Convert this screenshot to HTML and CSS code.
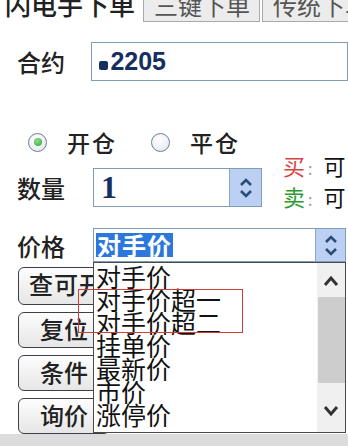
FILE: index.html
```html
<!DOCTYPE html>
<html>
<head>
    <meta name="viewport" content="width=device-width, initial-scale=1">
    <link rel="stylesheet" href="styles.css">
</head>
<body>
    <div class="screen">
        <!-- order type tabs -->
        <div class="tabs">
            <div class="tab active-tab">闪电手下单</div>
            <div class="tab">三键下单</div>
            <div class="tab">传统下单</div>
        </div>

        <div class="row contract-row">
            <span class="label">合约</span>
            <div class="field contract"><span class="mark"></span>2205</div>
        </div>

        <div class="radios">
            <span class="radio checked"></span><span class="radio-text">开仓</span>
            <span class="radio"></span><span class="radio-text">平仓</span>
        </div>

        <div class="row qty-row">
            <span class="label">数量</span>
            <div class="spin">
                <span class="spin-value">1</span>
                <span class="spin-btn">
                    <svg width="14" height="22" viewBox="0 0 14 22"><path d="M2 8 L7 3 L12 8" fill="none" stroke="#2c4a78" stroke-width="2.6"/><path d="M2 14 L7 19 L12 14" fill="none" stroke="#2c4a78" stroke-width="2.6"/></svg>
                </span>
            </div>
            <div class="avail">
                <div><span class="buy">买</span><span class="colon">:</span> 可</div>
                <div><span class="sell">卖</span><span class="colon">:</span> 可</div>
            </div>
        </div>

        <div class="row price-row">
            <span class="label">价格</span>
            <div class="combo">
                <span class="selected">对手价</span>
                <span class="combo-btn">
                    <svg width="14" height="26" viewBox="0 0 14 26"><path d="M2 10 L7 5 L12 10" fill="none" stroke="#2c4a78" stroke-width="2.6"/><path d="M2 17 L7 22 L12 17" fill="none" stroke="#2c4a78" stroke-width="2.6"/></svg>
                </span>
            </div>
        </div>

        <div class="buttons">
            <div class="btn btn-first">查可开</div>
            <div class="btn">复位</div>
            <div class="btn">条件</div>
            <div class="btn">询价</div>
        </div>

        <div class="status"></div>

        <!-- open dropdown of the price combo -->
        <div class="droplist">
            <ul class="items">
                <li>对手价</li>
                <li>对手价超一</li>
                <li>对手价超二</li>
                <li>挂单价</li>
                <li>最新价</li>
                <li>市价</li>
                <li>涨停价</li>
            </ul>
            <div class="scrollbar">
                <svg class="arrow-up" width="16" height="12" viewBox="0 0 16 12"><path d="M2 10 L8 3 L14 10" fill="none" stroke="#333" stroke-width="3"/></svg>
                <div class="thumb"></div>
                <svg class="arrow-down" width="16" height="12" viewBox="0 0 16 12"><path d="M2 2 L8 9 L14 2" fill="none" stroke="#333" stroke-width="3"/></svg>
            </div>
        </div>

        <!-- red annotation box -->
        <div class="highlight-box"></div>
    </div>
</body>
</html>
```

FILE: styles.css
```css
body {
    margin: 0;
    background: #fff;
    font-family: "Noto Sans CJK SC", "Noto Sans", sans-serif;
}

.screen {
    position: relative;
    width: 348px;
    height: 446px;
    overflow: hidden;
    background: #fff;
}

/* Tabs */
.tabs {
    display: flex;
    height: 30px;
    margin-top: -8px;
}

.tab {
    box-sizing: border-box;
    height: 30px;
    padding: 0 10px;
    font-size: 24px;
    line-height: 25px;
    color: #555;
    background: #ececec;
    border: 1px solid #a9a9a9;
    border-top: none;
    margin-left: 2px;
    white-space: nowrap;
}

.active-tab {
    width: 141px;
    margin-left: 0;
    padding-left: 5px;
    font-size: 26px;
    line-height: 24px;
    color: #222;
    background: #fff;
    border: none;
    font-weight: 500;
}

.tab:nth-child(2) {
    width: 117px;
}

/* Rows */
.row {
    display: flex;
    align-items: center;
}

.label {
    width: 76px;
    padding-left: 17px;
    font-size: 24px;
    font-weight: 500;
    color: #222;
}

.field {
    box-sizing: border-box;
    border: 1px solid #7f9db9;
    background: #fff;
}

.contract-row {
    margin-top: 20px;
    height: 39px;
}

.contract {
    width: 262px;
    height: 39px;
    padding-left: 7px;
    display: flex;
    align-items: center;
    font-family: "Liberation Sans", sans-serif;
    font-weight: bold;
    font-size: 25px;
    color: #15305e;
}

.mark {
    display: inline-block;
    width: 9px;
    height: 9px;
    margin-top: 7px;
    margin-right: 2px;
    border-radius: 2px;
    background: #15305e;
}

/* Open / close radios */
.radios {
    display: flex;
    align-items: center;
    height: 24px;
    margin-top: 49px;
    padding-left: 28px;
}

.radio {
    box-sizing: border-box;
    width: 19px;
    height: 19px;
    border-radius: 50%;
    border: 1.5px solid #6d7f97;
    background: radial-gradient(circle at 40% 35%, #fff 0%, #e9edf3 70%, #cfd6e0 100%);
    display: flex;
    align-items: center;
    justify-content: center;
}

.radio.checked::after {
    content: "";
    width: 8px;
    height: 8px;
    border-radius: 50%;
    background: radial-gradient(circle at 40% 35%, #8fe08a, #2ea332);
}

.radio-text {
    font-size: 23px;
    font-weight: 500;
    letter-spacing: 2px;
    color: #222;
    margin-left: 20px;
    margin-right: 34px;
}

/* Quantity */
.qty-row {
    margin-top: 14px;
    height: 39px;
}

.spin {
    box-sizing: border-box;
    width: 169px;
    height: 39px;
    border: 1px solid #7f9db9;
    display: flex;
    align-items: center;
    justify-content: space-between;
}

.spin-value {
    padding-left: 7px;
    font-family: "Liberation Serif", serif;
    font-weight: bold;
    font-size: 32px;
    color: #15305e;
}

.spin-btn,
.combo-btn {
    box-sizing: border-box;
    width: 32px;
    height: 37px;
    background: #bcd0f3;
    border-left: 1px solid #8ea7cc;
    display: flex;
    align-items: center;
    justify-content: center;
}

.avail {
    margin-left: 21px;
    margin-top: -12px;
    font-size: 22px;
    line-height: 28px;
    color: #111;
    white-space: nowrap;
}

.buy {
    color: #d9453f;
}

.sell {
    color: #2f9a2f;
}

.colon {
    color: #999;
    font-size: 16px;
    margin: 0 6px 0 3px;
}

/* Price combo */
.price-row {
    margin-top: 21px;
    height: 34px;
}

.combo {
    box-sizing: border-box;
    width: 253px;
    height: 34px;
    border: 1px solid #7f9db9;
    display: flex;
    align-items: center;
    justify-content: space-between;
    padding-left: 2px;
}

.selected {
    background: #2b77dc;
    color: #fff;
    font-weight: bold;
    font-size: 24px;
    line-height: 24px;
    padding: 0 1px;
    letter-spacing: 1px;
}

.combo-btn {
    height: 32px;
    width: 30px;
}

/* Left buttons */
.buttons {
    display: flex;
    flex-direction: column;
    gap: 7px;
    margin-top: 5px;
    padding-left: 18px;
}

.btn {
    box-sizing: border-box;
    width: 92px;
    height: 36px;
    border: 1.5px solid #3a3f48;
    border-radius: 6px;
    background: linear-gradient(#fdfdfd, #e6e6e6);
    font-size: 24px;
    font-weight: 500;
    line-height: 32px;
    text-align: center;
    color: #222;
}

.btn-first {
    height: 38px;
    padding-left: 10px;
    text-align: left;
    letter-spacing: 1px;
}

.status {
    position: absolute;
    left: 0;
    right: 0;
    bottom: 0;
    height: 12px;
    background: #dcdcdc;
}

/* Dropdown list */
.droplist {
    position: absolute;
    left: 93px;
    top: 262px;
    box-sizing: border-box;
    width: 253px;
    height: 171px;
    background: #fff;
    border: 1px solid #4a4a4a;
    display: flex;
}

.items {
    flex: 1;
    margin: 0;
    padding: 0 0 0 2px;
    list-style: none;
    font-size: 25px;
    line-height: 23px;
    color: #111;
    overflow: hidden;
}

.items li {
    height: 23px;
    white-space: nowrap;
}

.items li:first-child {
    margin-top: 2px;
}

.scrollbar {
    width: 28px;
    background: #f0f0f0;
    display: flex;
    flex-direction: column;
    align-items: center;
}

.arrow-up {
    margin-top: 12px;
}

.thumb {
    width: 27px;
    height: 86px;
    margin-top: 10px;
    background: #cdcdcd;
}

.arrow-down {
    margin-top: auto;
    margin-bottom: 15px;
}

.highlight-box {
    position: absolute;
    left: 78px;
    top: 289px;
    width: 163px;
    height: 42px;
    border: 1.5px solid #d23c3c;
}
```
